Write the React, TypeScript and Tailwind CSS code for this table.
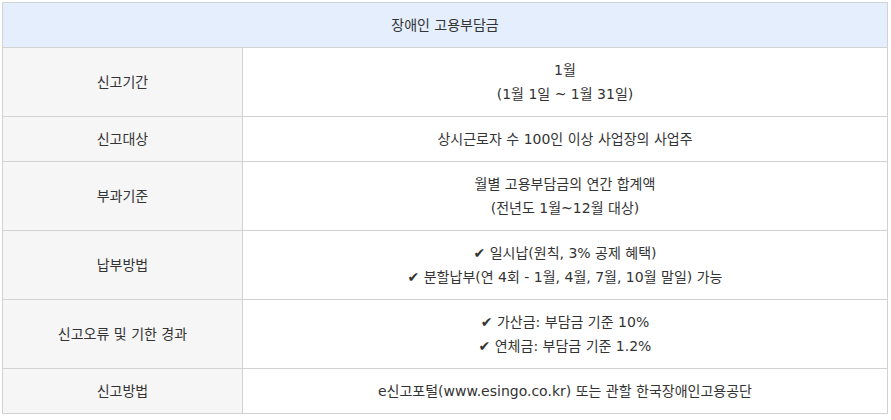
import React from 'react';

const rows: { label: string; lines: string[] }[] = [
  { label: '신고기간', lines: ['1월', '(1월 1일 ~ 1월 31일)'] },
  { label: '신고대상', lines: ['상시근로자 수 100인 이상 사업장의 사업주'] },
  { label: '부과기준', lines: ['월별 고용부담금의 연간 합계액', '(전년도 1월~12월 대상)'] },
  {
    label: '납부방법',
    lines: ['✔ 일시납(원칙, 3% 공제 혜택)', '✔ 분할납부(연 4회 - 1월, 4월, 7월, 10월 말일) 가능'],
  },
  { label: '신고오류 및 기한 경과', lines: ['✔ 가산금: 부담금 기준 10%', '✔ 연체금: 부담금 기준 1.2%'] },
  { label: '신고방법', lines: ['e신고포털(www.esingo.co.kr) 또는 관할 한국장애인고용공단'] },
];

export default function App() {
  return (
    <div className="bg-white p-[2px] font-['DejaVu_Sans','Noto_Sans_CJK_KR',sans-serif] text-[14px] leading-[24px] text-[#333]">
      <table className="w-[886px] border-collapse border border-[#d2d2d2]">
        <thead>
          <tr>
            <th colSpan={2} className="border border-[#d2d2d2] bg-[#e4eefd] px-2 py-[10px] text-center font-normal">
              장애인 고용부담금
            </th>
          </tr>
        </thead>
        <tbody>
          {rows.map((row) => (
            <tr key={row.label}>
              <td className="w-[240px] border border-[#d2d2d2] bg-[#f6f6f6] px-2 py-[10px] text-center">
                {row.label}
              </td>
              <td className="border border-[#d2d2d2] px-2 py-[10px] text-center">
                {row.lines.map((line) => (
                  <div key={line}>{line}</div>
                ))}
              </td>
            </tr>
          ))}
        </tbody>
      </table>
    </div>
  );
}
